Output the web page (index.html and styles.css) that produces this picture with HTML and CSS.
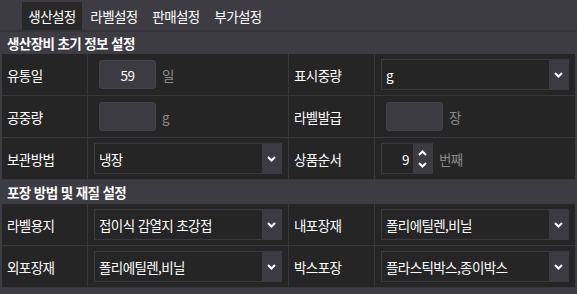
FILE: index.html
```html
<!DOCTYPE html>
<html lang="ko">
<head>
  <meta charset="UTF-8">
  <meta name="viewport" content="width=device-width, initial-scale=1.0">
  <title>설정</title>
  <link rel="stylesheet" href="styles.css">
</head>
<body>

  <div class="tabs">
    <span class="tab active">생산설정</span>
    <span class="tab">라벨설정</span>
    <span class="tab">판매설정</span>
    <span class="tab">부가설정</span>
  </div>

  <div class="section-title">생산장비 초기 정보 설정</div>
  <div class="form-grid">
    <div class="cell label">유통일</div>
    <div class="cell value">
      <span class="text-box">59</span><span class="unit">일</span>
    </div>
    <div class="cell label">표시중량</div>
    <div class="cell value last">
      <div class="select">
        <span class="select-text">g</span>
        <span class="select-arrow"><svg width="9" height="6" viewBox="0 0 9 6"><polyline points="1,1 4.5,4.5 8,1" fill="none" stroke="#fff" stroke-width="2"/></svg></span>
      </div>
    </div>

    <div class="cell label">공중량</div>
    <div class="cell value">
      <span class="text-box"></span><span class="unit">g</span>
    </div>
    <div class="cell label">라벨발급</div>
    <div class="cell value last">
      <span class="text-box"></span><span class="unit">장</span>
    </div>

    <div class="cell label">보관방법</div>
    <div class="cell value">
      <div class="select">
        <span class="select-text">냉장</span>
        <span class="select-arrow"><svg width="9" height="6" viewBox="0 0 9 6"><polyline points="1,1 4.5,4.5 8,1" fill="none" stroke="#fff" stroke-width="2"/></svg></span>
      </div>
    </div>
    <div class="cell label">상품순서</div>
    <div class="cell value last">
      <div class="number">
        <span class="number-text">9</span>
        <span class="spinner">
          <svg width="9" height="6" viewBox="0 0 9 6"><polyline points="1,5 4.5,1.5 8,5" fill="none" stroke="#fff" stroke-width="2"/></svg>
          <svg width="9" height="6" viewBox="0 0 9 6"><polyline points="1,1 4.5,4.5 8,1" fill="none" stroke="#fff" stroke-width="2"/></svg>
        </span>
      </div>
      <span class="unit">번째</span>
    </div>
  </div>

  <div class="section-title second">포장 방법 및 재질 설정</div>
  <div class="form-grid">
    <div class="cell label">라벨용지</div>
    <div class="cell value">
      <div class="select">
        <span class="select-text">접이식 감열지 초강접</span>
        <span class="select-arrow"><svg width="9" height="6" viewBox="0 0 9 6"><polyline points="1,1 4.5,4.5 8,1" fill="none" stroke="#fff" stroke-width="2"/></svg></span>
      </div>
    </div>
    <div class="cell label">내포장재</div>
    <div class="cell value last">
      <div class="select">
        <span class="select-text">폴리에틸렌,비닐</span>
        <span class="select-arrow"><svg width="9" height="6" viewBox="0 0 9 6"><polyline points="1,1 4.5,4.5 8,1" fill="none" stroke="#fff" stroke-width="2"/></svg></span>
      </div>
    </div>

    <div class="cell label">외포장재</div>
    <div class="cell value">
      <div class="select">
        <span class="select-text">폴리에틸렌,비닐</span>
        <span class="select-arrow"><svg width="9" height="6" viewBox="0 0 9 6"><polyline points="1,1 4.5,4.5 8,1" fill="none" stroke="#fff" stroke-width="2"/></svg></span>
      </div>
    </div>
    <div class="cell label">박스포장</div>
    <div class="cell value last">
      <div class="select">
        <span class="select-text">플라스틱박스,종이박스</span>
        <span class="select-arrow"><svg width="9" height="6" viewBox="0 0 9 6"><polyline points="1,1 4.5,4.5 8,1" fill="none" stroke="#fff" stroke-width="2"/></svg></span>
      </div>
    </div>
  </div>

</body>
</html>
```

FILE: styles.css
```css
body {
  font-family: "Noto Sans CJK KR", "Noto Sans", sans-serif;
  font-size: 13.5px;
  letter-spacing: -0.6px;
  background-color: #3d3c42;
  color: #fff;
  margin: 0;
  padding: 0;
}

.tabs {
  display: flex;
  height: 30px;
  padding-left: 22px;
  border-bottom: 2px solid #343338;
  align-items: flex-end;
}

.tab {
  width: 60px;
  height: 28px;
  margin-right: 2px;
  display: flex;
  align-items: center;
  justify-content: center;
}

.tab.active {
  background-color: #282828;
}

.section-title {
  height: 22px;
  line-height: 22px;
  padding-left: 7px;
  font-weight: bold;
}

.section-title.second {
  height: 24px;
  line-height: 24px;
}

.form-grid {
  display: grid;
  grid-template-columns: 86px 201px 86px 1fr;
  margin: 0 2px 0 2px;
  background-color: #252525;
}

.cell {
  box-sizing: border-box;
  height: 42px;
  border-bottom: 1px solid #38373c;
  border-right: 1px solid #38373c;
  display: flex;
  align-items: center;
}

.cell.last {
  border-right: none;
}

.label {
  padding-left: 5px;
}

.value {
  padding: 0 6px;
}

.text-box {
  box-sizing: border-box;
  width: 57px;
  height: 29px;
  margin-left: 5px;
  background-color: #3c3b41;
  border: 1px solid #44434a;
  border-radius: 3px;
  display: flex;
  align-items: center;
  justify-content: center;
}

.unit {
  color: #8a8a8a;
  margin-left: 6px;
}

.select {
  box-sizing: border-box;
  width: 100%;
  height: 31px;
  border: 1px solid #3b3a40;
  display: flex;
}

.select-text {
  flex: 1;
  padding-left: 4px;
  display: flex;
  align-items: center;
}

.select-arrow {
  width: 19px;
  background-color: #3c3b41;
  display: flex;
  align-items: center;
  justify-content: center;
}

.number {
  box-sizing: border-box;
  width: 52px;
  height: 31px;
  border: 1px solid #3b3a40;
  display: flex;
}

.number-text {
  flex: 1;
  padding-right: 4px;
  display: flex;
  align-items: center;
  justify-content: flex-end;
}

.spinner {
  width: 19px;
  background-color: #3c3b41;
  display: flex;
  flex-direction: column;
  align-items: center;
  justify-content: center;
  gap: 6px;
}
```
